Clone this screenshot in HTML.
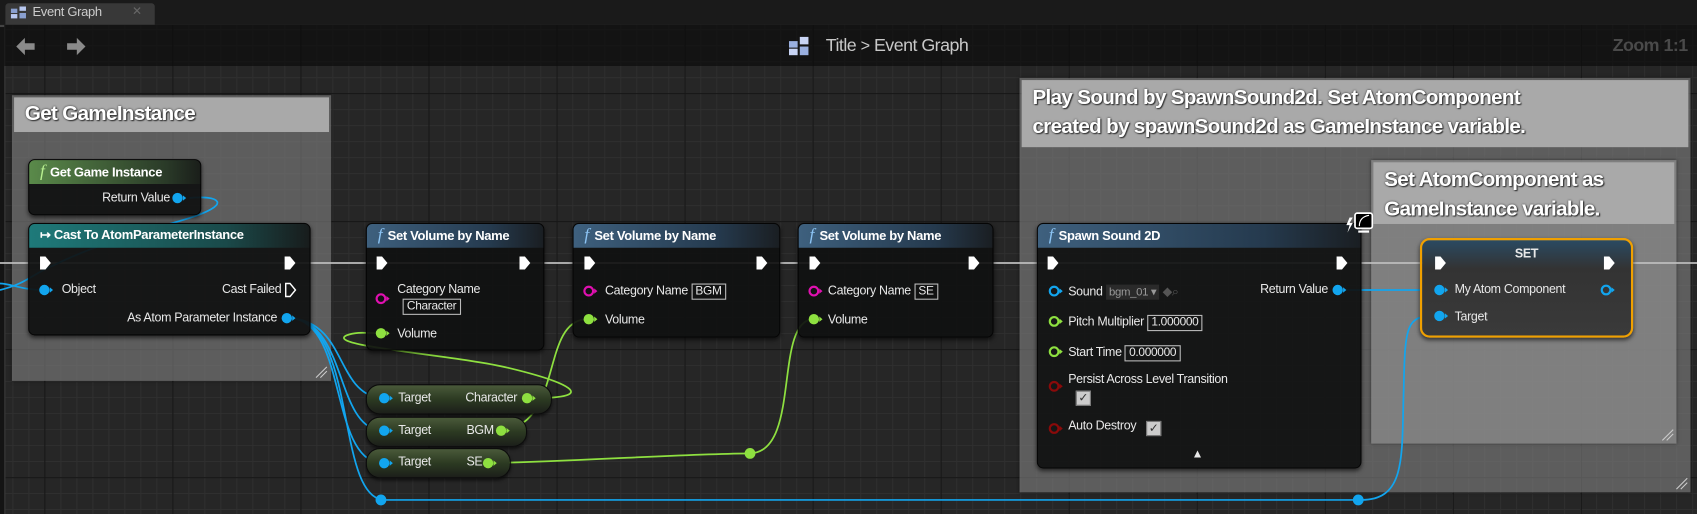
<!DOCTYPE html>
<html><head><meta charset="utf-8">
<style>
html,body{margin:0;padding:0;width:1697px;height:514px;overflow:hidden;background:#141414}
#w{position:absolute;left:0;top:0;width:1568px;height:475px;transform:scale(1.08227,1.0821);transform-origin:0 0;font-family:"Liberation Sans",sans-serif;color:#e8e8e8}
.abs{position:absolute}
#graph{left:4px;top:23px;width:1564px;height:452px;background-color:#262626;
background-image:
linear-gradient(90deg,#151515 1px,transparent 1px),
linear-gradient(0deg,#151515 1px,transparent 1px),
linear-gradient(90deg,#2f2f2f 1px,transparent 1px),
linear-gradient(0deg,#2f2f2f 1px,transparent 1px);
background-size:118.3px 118.3px,118.3px 118.3px,14.79px 14.79px,14.79px 14.79px;
background-position:36px 64px,36px 64px,36px 64px,36px 64px;border-left:1px solid #3a3a3a}
#tb{left:4px;top:23px;width:1564px;height:38px;background:rgba(12,12,12,.72)}
.cm{position:absolute;background:rgba(128,128,128,.62);box-shadow:0 0 3px rgba(0,0,0,.5)}
.cmt{position:absolute;left:2px;right:2px;top:2px;background:#a9a9a9;color:#fff;font-weight:bold;font-size:19px;letter-spacing:-0.6px;line-height:25px;padding:3px 10px;box-sizing:border-box;text-shadow:1px 1px 1px #333,0 0 2px #333}
.node{position:absolute;background:rgba(16,17,17,.93);border:1px solid #050505;border-radius:6px;box-shadow:0 2px 4px rgba(0,0,0,.6);font-size:12px}
.hd{height:22px;border-radius:5px 5px 0 0;font-weight:bold;font-size:12px;letter-spacing:-0.3px;line-height:21px;padding-left:10px;color:#fff}
.f{font-style:italic;font-family:"Liberation Serif",serif;font-size:16px;margin-right:5px;font-weight:normal}
.t{position:absolute;white-space:nowrap;font-size:11.5px;letter-spacing:-0.3px;color:#e8e8e8}
.box{border:1px solid #bbb;padding:0 3px;font-size:11px;line-height:13px;display:inline-block}
.pill{position:absolute;height:26px;border-radius:13px;background:linear-gradient(180deg,#4a5a3a 0%,#2c3a22 50%,#1c1f1a 100%);border:1px solid #0c0c0c;box-shadow:0 2px 3px rgba(0,0,0,.6);font-size:12px}
</style></head><body>
<div id="w">
<div class="abs" style="left:0;top:0;width:1568px;height:23px;background:#1a1a1a"></div>
<div class="abs" style="left:5px;top:3px;width:138px;height:20px;background:#383838;border-radius:3px 3px 0 0"></div>
<svg class="abs" style="left:10px;top:6px" width="16" height="12"><rect x="0" y="2" width="6" height="4" fill="#8aa0d0"/><rect x="8" y="0" width="6" height="4" fill="#b8c8f0"/><rect x="0" y="7" width="6" height="4" fill="#b8c8f0"/><rect x="8" y="6" width="6" height="5" fill="#8aa0d0"/></svg>
<div class="abs" style="left:30px;top:4px;font-size:12px;color:#ccc;letter-spacing:-0.3px">Event Graph</div>
<div class="abs" style="left:122px;top:4px;font-size:11px;color:#666">✕</div>
<div class="abs" style="left:0;top:23px;width:1568px;height:2px;background:#444"></div>
<div id="graph" class="abs"></div>
<div id="tb" class="abs"></div>
<svg class="abs" style="left:12px;top:32px" width="70" height="22"><path d="M3 11 L11 3 L11 8 L20 8 L20 14 L11 14 L11 19Z" fill="#8a8a8a"/><path d="M67 11 L59 3 L59 8 L50 8 L50 14 L59 14 L59 19Z" fill="#8a8a8a"/></svg>
<svg class="abs" style="left:729px;top:34px" width="22" height="18"><rect x="0" y="4" width="8" height="6" fill="#9ab0e0"/><rect x="10" y="0" width="8" height="7" fill="#c8d4f4"/><rect x="0" y="11" width="8" height="6" fill="#c8d4f4"/><rect x="10" y="9" width="8" height="8" fill="#9ab0e0"/></svg>
<div class="abs" style="left:763px;top:33px;font-size:16.5px;letter-spacing:-0.5px;color:#c8c8c8">Title <span style="font-size:15px">&gt;</span> Event Graph</div>
<div class="abs" style="left:1490px;top:33px;font-size:16.5px;letter-spacing:-0.5px;color:#4a4a4a;font-weight:bold">Zoom 1:1</div>

<div class="cm" style="left:11px;top:88px;width:295px;height:264px"><div class="cmt" style="height:32px">Get GameInstance</div></div>
<div class="cm" style="left:942px;top:72px;width:620px;height:383px"><div class="cmt" style="height:62px;line-height:27px">Play Sound by SpawnSound2d. Set AtomComponent<br>created by spawnSound2d as GameInstance variable.</div></div>
<div class="cm" style="left:1267px;top:148px;width:282px;height:262px;background:rgba(150,150,150,.6)"><div class="cmt" style="height:57px;line-height:27px">Set AtomComponent as<br>GameInstance variable.</div></div>

<svg class="abs" style="left:0;top:0" width="1568" height="475">
<g fill="none" stroke-width="1.6">
<path d="M0 243 H1568" stroke="#bdbdbd"/>
<path d="M0 268 C25 262 30 253 50 245 C90 225 140 212 170 203 C220 188 200 180 175 183" stroke="#12a5ee"/>
<path d="M0 262 C10 262 20 268 40 268" stroke="#12a5ee"/>
<path d="M270 294 C320 300 310 360 350 368" stroke="#12a5ee"/>
<path d="M270 294 C320 300 310 390 350 398" stroke="#12a5ee"/>
<path d="M270 294 C320 300 305 420 350 428" stroke="#12a5ee"/>
<path d="M270 294 C330 300 310 460 355 462 H1258 C1300 462 1295 420 1297 360 C1298 300 1300 292 1325 292" stroke="#12a5ee"/>
<path d="M1240 268 H1330" stroke="#12a5ee"/>
<path d="M490 368 C560 368 520 352 470 340 C420 328 300 320 320 310 C330 306 340 308 352 308" stroke="#8ee040"/>
<path d="M465 398 C520 390 500 300 540 295" stroke="#8ee040"/>
<path d="M455 428 C560 425 620 420 693 419 C740 418 715 300 750 295" stroke="#8ee040"/>
</g>
<circle cx="693" cy="419" r="5" fill="#8ee040"/>
<circle cx="352" cy="462" r="5" fill="#12a5ee"/>
<circle cx="1255" cy="462" r="5" fill="#12a5ee"/>
</svg>

<div class="node" style="left:26px;top:147px;width:158px;height:50px"><div class="hd" style="background:linear-gradient(90deg,#5a8a4a,#2a3a28 80%,#1a1e1a)"><span class="f" style="color:#b8f090">f</span>Get Game Instance</div>
<div class="t" style="right:28px;top:29px">Return Value</div></div>
<div class="node" style="left:26px;top:206px;width:259px;height:102px"><div class="hd" style="background:linear-gradient(90deg,#1e7a7a,#1a4a4a 70%,#181c1c)">↦ Cast To AtomParameterInstance</div>
<div class="t" style="left:30px;top:55px">Object</div><div class="t" style="right:26px;top:55px">Cast Failed</div>
<div class="t" style="right:30px;top:81px">As Atom Parameter Instance</div></div>
<div class="node" style="left:338px;top:206px;width:163px;height:116px"><div class="hd" style="background:linear-gradient(90deg,#3e607e,#253a4e 70%,#1a1e22)"><span class="f" style="color:#8cc4f4">f</span>Set Volume by Name</div>
<div class="t" style="left:28px;top:55px">Category Name</div><div class="t" style="left:33px;top:69px"><span class="box">Character</span></div>
<div class="t" style="left:28px;top:96px">Volume</div></div>
<div class="node" style="left:529px;top:206px;width:190px;height:104px"><div class="hd" style="background:linear-gradient(90deg,#3e607e,#253a4e 70%,#1a1e22)"><span class="f" style="color:#8cc4f4">f</span>Set Volume by Name</div>
<div class="t" style="left:29px;top:55px">Category Name <span class="box">BGM</span></div>
<div class="t" style="left:29px;top:83px">Volume</div></div>
<div class="node" style="left:737px;top:206px;width:179px;height:104px"><div class="hd" style="background:linear-gradient(90deg,#3e607e,#253a4e 70%,#1a1e22)"><span class="f" style="color:#8cc4f4">f</span>Set Volume by Name</div>
<div class="t" style="left:27px;top:55px">Category Name <span class="box">SE</span></div>
<div class="t" style="left:27px;top:83px">Volume</div></div>
<div class="node" style="left:958px;top:206px;width:298px;height:225px"><div class="hd" style="background:linear-gradient(90deg,#3e607e,#253a4e 70%,#1a1e22)"><span class="f" style="color:#8cc4f4">f</span>Spawn Sound 2D</div>
<div class="t" style="left:28px;top:55px">Sound <span style="background:#2a2a2a;color:#999;font-size:10.5px;padding:1px 3px">bgm_01 ▾</span> <span style="color:#555">◆⌕</span></div>
<div class="t" style="right:30px;top:55px">Return Value</div>
<div class="t" style="left:28px;top:84px">Pitch Multiplier <span class="box">1.000000</span></div>
<div class="t" style="left:28px;top:112px">Start Time <span class="box">0.000000</span></div>
<div class="t" style="left:28px;top:138px">Persist Across Level Transition</div>
<div class="abs" style="left:35px;top:154px;width:12px;height:12px;background:#ccc;border:1px solid #777;color:#333;font-size:11px;line-height:12px;text-align:center">✓</div>
<div class="t" style="left:28px;top:181px">Auto Destroy</div>
<div class="abs" style="left:100px;top:182px;width:12px;height:12px;background:#ccc;border:1px solid #777;color:#333;font-size:11px;line-height:12px;text-align:center">✓</div>
<div class="t" style="left:142px;top:207px;font-size:11px">▲</div></div>
<svg class="abs" style="left:1243px;top:195px" width="26" height="24"><path d="M4 6 L1 13 L4 13 L2 20 L7 11 L4 11 L7 6Z" fill="#fff"/><rect x="9" y="2" width="16" height="14" rx="2" fill="#000" stroke="#fff" stroke-width="1.6"/><path d="M13 14 C13 8 16 5 22 4" stroke="#fff" fill="none"/><rect x="12" y="18" width="10" height="2" fill="#fff"/></svg>
<div class="node" style="left:1312px;top:220px;width:193px;height:88px;border:2px solid #f0a000;border-radius:9px;background:linear-gradient(180deg,#2a4a62 0%,#333 30%,#3a3a3a 100%)">
<div class="t" style="left:0;right:0;text-align:center;top:7px;font-weight:bold">SET</div>
<div class="t" style="left:30px;top:40px">My Atom Component</div>
<div class="t" style="left:30px;top:65px">Target</div></div>
<div class="pill" style="left:338px;top:355px;width:170px"><div class="t" style="left:29px;top:6px">Target</div><div class="t" style="left:91px;top:6px">Character</div></div>
<div class="pill" style="left:338px;top:385px;width:147px"><div class="t" style="left:29px;top:6px">Target</div><div class="t" style="left:92px;top:6px">BGM</div></div>
<div class="pill" style="left:338px;top:414px;width:132px"><div class="t" style="left:29px;top:6px">Target</div><div class="t" style="left:92px;top:6px">SE</div></div>

<svg class="abs" style="left:0;top:0" width="1568" height="475">
<defs>
<g id="ex"><path d="M0 -6 H5 L10 0 L5 6 H0Z" fill="#fff"/></g>
<g id="b"><circle r="4.8" fill="#12a5ee"/><path d="M5 -2.5 L8 0 L5 2.5Z" fill="#12a5ee"/></g>
<g id="g"><circle r="4.8" fill="#8ee040"/><path d="M5 -2.5 L8 0 L5 2.5Z" fill="#8ee040"/></g>
<g id="m"><circle r="4" fill="none" stroke="#e010b0" stroke-width="2"/><path d="M5 -2.5 L8 0 L5 2.5Z" fill="#e010b0"/></g>
<g id="bo"><circle r="4" fill="none" stroke="#12a5ee" stroke-width="2"/><path d="M5 -2.5 L8 0 L5 2.5Z" fill="#12a5ee"/></g>
<g id="go"><circle r="4" fill="none" stroke="#8ee040" stroke-width="2"/><path d="M5 -2.5 L8 0 L5 2.5Z" fill="#8ee040"/></g>
<g id="r"><circle r="4" fill="none" stroke="#8a0a0a" stroke-width="2"/><path d="M5 -2.5 L8 0 L5 2.5Z" fill="#8a0a0a"/></g>
</defs>
<use href="#b" x="164" y="183"/>
<use href="#ex" x="37" y="243"/><use href="#ex" x="263" y="243"/>
<use href="#b" x="41" y="268"/>
<path d="M264 262 H268 L273 268 L268 274 H264Z" fill="none" stroke="#fff" stroke-width="1.3"/>
<use href="#b" x="265" y="294"/>
<use href="#ex" x="348" y="243"/><use href="#ex" x="480" y="243"/>
<use href="#m" x="352" y="276"/><use href="#g" x="352" y="308"/>
<use href="#ex" x="540" y="243"/><use href="#ex" x="699" y="243"/>
<use href="#m" x="544" y="269"/><use href="#g" x="544" y="295"/>
<use href="#ex" x="748" y="243"/><use href="#ex" x="895" y="243"/>
<use href="#m" x="752" y="269"/><use href="#g" x="752" y="295"/>
<use href="#ex" x="968" y="243"/><use href="#ex" x="1235" y="243"/>
<use href="#bo" x="974" y="269"/><use href="#b" x="1236" y="268"/>
<use href="#go" x="974" y="297"/><use href="#go" x="974" y="325"/>
<use href="#r" x="974" y="357"/><use href="#r" x="974" y="396"/>
<use href="#ex" x="1326" y="243"/><use href="#ex" x="1482" y="243"/>
<use href="#b" x="1330" y="268"/><use href="#bo" x="1484" y="268"/>
<use href="#b" x="1330" y="292"/>
<use href="#b" x="355" y="368"/><use href="#g" x="487" y="368"/>
<use href="#b" x="355" y="398"/><use href="#g" x="463" y="398"/>
<use href="#b" x="355" y="428"/><use href="#g" x="451" y="428"/>
<g stroke="#ccc" stroke-width="1"><path d="M292 349 L302 339 M296 349 L302 343 M1536 407 L1546 397 M1540 407 L1546 401 M1549 452 L1559 442 M1553 452 L1559 446"/></g>
</svg>
</div>
</body></html>
